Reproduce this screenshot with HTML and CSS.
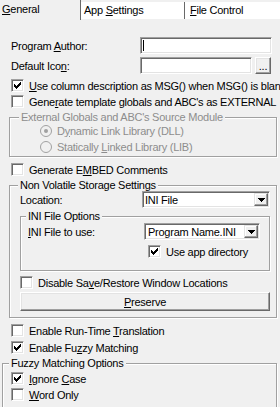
FILE: index.html
```html
<!DOCTYPE html>
<html lang="en">
<head>
    <meta charset="UTF-8">
    <meta name="viewport" content="width=device-width, initial-scale=1.0">
    <title>General</title>
    <link rel="stylesheet" href="styles.css">
</head>
<body>
    <div class="tabs">
        <div class="tab tab-active"><u>G</u>eneral</div>
        <div class="tab tab-app">App <u>S</u>ettings</div>
        <div class="tab tab-file"><u>F</u>ile Control</div>
    </div>

    <div class="page">
        <div class="field field-author">
            <label class="field-label">Program <u>A</u>uthor:</label>
            <div class="edit edit-author"><span class="caret"></span></div>
        </div>
        <div class="field field-icon">
            <label class="field-label">Default Ico<u>n</u>:</label>
            <div class="edit edit-icon"></div>
            <button class="btn btn-browse">...</button>
        </div>

        <div class="check-row row-msg">
            <span class="box"><svg width="11" height="11" shape-rendering="crispEdges"><path d="M8 2h1v1h-1z M7 3h2v1h-2z M2 4h1v1h-1z M6 4h3v1h-3z M2 5h2v1h-2z M5 5h3v1h-3z M2 6h5v1h-5z M3 7h3v1h-3z M4 8h1v1h-1z"/></svg></span>
            <span><u>U</u>se column description as MSG() when MSG() is blank</span>
        </div>
        <div class="check-row row-ext">
            <span class="box"></span>
            <span>Gene<u>r</u>ate template globals and ABC's as EXTERNAL</span>
        </div>

        <fieldset class="group group-ext">
            <legend>External Globals and ABC's Source Module</legend>
            <div class="radio-row">
                <svg class="radio" width="12" height="12"><circle cx="6" cy="6" r="5.5" fill="#f0f0f0" stroke="#a0a0a0"/><circle cx="6" cy="6" r="2" fill="#a0a0a0"/></svg>
                <span>D<u>y</u>namic Link Library (DLL)</span>
            </div>
            <div class="radio-row radio-lib">
                <svg class="radio" width="12" height="12"><circle cx="6" cy="6" r="5.5" fill="#f0f0f0" stroke="#a0a0a0"/></svg>
                <span>Statically <u>L</u>inked Library (LIB)</span>
            </div>
        </fieldset>

        <div class="check-row row-embed">
            <span class="box"></span>
            <span>Generate E<u>M</u>BED Comments</span>
        </div>

        <fieldset class="group group-nv">
            <legend>Non Volatile Storage Settings</legend>
            <div class="field field-location">
                <label class="loc-label">Location:</label>
                <div class="combo combo-location">
                    <span class="combo-text">INI File</span>
                    <span class="combo-btn"><svg width="7" height="4" shape-rendering="crispEdges"><path d="M0 0h7v1h-1v1h-1v1h-1v1h-1v-1h-1v-1h-1v-1h-1z"/></svg></span>
                </div>
            </div>

            <fieldset class="group group-ini">
                <legend>INI File Options</legend>
                <div class="field field-ini">
                    <label class="ini-label"><u>I</u>NI File to use:</label>
                    <div class="combo combo-ini">
                        <span class="combo-text">Program Name.INI</span>
                        <span class="combo-btn"><svg width="7" height="4" shape-rendering="crispEdges"><path d="M0 0h7v1h-1v1h-1v1h-1v1h-1v-1h-1v-1h-1v-1h-1z"/></svg></span>
                    </div>
                </div>
                <div class="check-row row-appdir">
                    <span class="box"><svg width="11" height="11" shape-rendering="crispEdges"><path d="M8 2h1v1h-1z M7 3h2v1h-2z M2 4h1v1h-1z M6 4h3v1h-3z M2 5h2v1h-2z M5 5h3v1h-3z M2 6h5v1h-5z M3 7h3v1h-3z M4 8h1v1h-1z"/></svg></span>
                    <span>Use app directory</span>
                </div>
            </fieldset>

            <div class="check-row row-disable">
                <span class="box"></span>
                <span>Disable Sa<u>v</u>e/Restore Window Locations</span>
            </div>
            <button class="btn btn-preserve"><u>P</u>reserve</button>
        </fieldset>

        <div class="check-row row-translate">
            <span class="box"></span>
            <span>Enable Run-Time <u>T</u>ranslation</span>
        </div>
        <div class="check-row row-fuzzy">
            <span class="box"><svg width="11" height="11" shape-rendering="crispEdges"><path d="M8 2h1v1h-1z M7 3h2v1h-2z M2 4h1v1h-1z M6 4h3v1h-3z M2 5h2v1h-2z M5 5h3v1h-3z M2 6h5v1h-5z M3 7h3v1h-3z M4 8h1v1h-1z"/></svg></span>
            <span>Enable Fu<u>z</u>zy Matching</span>
        </div>

        <fieldset class="group group-fuzzy">
            <legend>Fuzzy Matching Options</legend>
            <div class="check-row row-case">
                <span class="box"><svg width="11" height="11" shape-rendering="crispEdges"><path d="M8 2h1v1h-1z M7 3h2v1h-2z M2 4h1v1h-1z M6 4h3v1h-3z M2 5h2v1h-2z M5 5h3v1h-3z M2 6h5v1h-5z M3 7h3v1h-3z M4 8h1v1h-1z"/></svg></span>
                <span><u>I</u>gnore <u>C</u>ase</span>
            </div>
            <div class="check-row row-word">
                <span class="box"></span>
                <span><u>W</u>ord Only</span>
            </div>
        </fieldset>
    </div>
</body>
</html>
```

FILE: styles.css
```css
* {
    box-sizing: border-box;
}
body {
    margin: 0;
    width: 280px;
    height: 407px;
    overflow: hidden;
    background-color: #f0f0f0;
    font-family: "Liberation Sans", Arial, sans-serif;
    font-size: 11px;
    letter-spacing: -0.25px;
    color: #000;
}
u {
    text-decoration: underline;
    text-underline-offset: 1px;
}

/* tab strip */
.tabs {
    display: flex;
    height: 20px;
}
.tab {
    white-space: nowrap;
}
.tab-active {
    width: 81px;
    height: 20px;
    padding-left: 2px;
    line-height: 19px;
    border-right: 1px solid #696969;
}
.tab-app, .tab-file {
    margin-top: 2px;
    height: 17px;
    padding-left: 3px;
    line-height: 17px;
    background-color: #fff;
}
.tab-app {
    width: 104px;
    border-right: 1px solid #696969;
}
.tab-file {
    flex: 1;
    padding-left: 5px;
}

/* page */
.page {
    padding-top: 17px;
}
.field {
    display: flex;
    align-items: center;
    height: 17px;
}
.field-label {
    width: 140px;
    padding-left: 11px;
}
.field-icon {
    margin-top: 3px;
}
.edit {
    height: 17px;
    background-color: #fff;
    border: 1px solid;
    border-color: #a0a0a0 #fff #fff #a0a0a0;
    box-shadow: inset 1px 1px #696969, inset -1px -1px #e3e3e3;
}
.edit-author {
    width: 132px;
    position: relative;
}
.caret {
    position: absolute;
    left: 2px;
    top: 2px;
    width: 1px;
    height: 11px;
    background-color: #000;
}
.edit-icon {
    width: 112px;
}

.btn {
    padding: 0;
    font: inherit;
    letter-spacing: inherit;
    color: #000;
    background-color: #f0f0f0;
    border: 1px solid;
    border-color: #fff #696969 #696969 #fff;
    box-shadow: inset -1px -1px #a0a0a0, inset 1px 1px #e3e3e3;
}
.btn-browse {
    width: 16px;
    height: 17px;
    margin-left: 3px;
    line-height: 17px;
}
.btn-preserve {
    display: block;
    width: 250px;
    height: 19px;
    margin: 3px 0 0 10px;
}

/* checkboxes */
.check-row {
    display: flex;
    align-items: center;
    gap: 5px;
    height: 13px;
    margin-left: 11px;
    white-space: nowrap;
}
.box {
    flex: none;
    width: 13px;
    height: 13px;
    background-color: #fff;
    border: 1px solid;
    border-color: #a0a0a0 #fff #fff #a0a0a0;
    box-shadow: inset 1px 1px #696969, inset -1px -1px #e3e3e3;
}
.box svg {
    display: block;
}
.row-msg {
    margin-top: 5px;
}
.row-ext {
    margin-top: 3px;
}
.row-embed {
    margin-top: 6px;
}

/* group boxes */
.group {
    min-width: 0;
    margin: 0;
    padding: 0;
    border: 1px solid #a0a0a0;
    box-shadow: inset 1px 1px #fff, 1px 1px #fff;
}
.group legend {
    padding: 0 2px;
    line-height: 12px;
    background-color: #f0f0f0;
}
.group-ext {
    margin: 3px 3px 0 9px;
    padding-bottom: 3px;
    color: #8d8d8d;
}
.group-ext legend {
    margin-left: 9px;
    line-height: 13px;
}
.radio-row {
    display: flex;
    align-items: center;
    gap: 5px;
    height: 13px;
    margin-left: 30px;
    white-space: nowrap;
}
.radio {
    flex: none;
}
.radio-lib {
    margin-top: 3px;
}

.group-nv {
    margin: 3px 3px 0 9px;
    padding-bottom: 6px;
}
.group-nv legend {
    margin-left: 8px;
}
.loc-label {
    width: 132px;
    padding-left: 10px;
}
.combo {
    display: flex;
    align-items: center;
    justify-content: space-between;
    height: 17px;
    padding: 0 2px 0 2px;
    background-color: #fff;
    border: 1px solid;
    border-color: #a0a0a0 #fff #fff #a0a0a0;
    box-shadow: inset 1px 1px #696969, inset -1px -1px #e3e3e3;
}
.combo-location {
    width: 128px;
}
.combo-btn {
    display: flex;
    align-items: center;
    justify-content: center;
    width: 14px;
    height: 13px;
    margin-right: -1px;
    background-color: #f0f0f0;
    border: 1px solid;
    border-color: #e3e3e3 #696969 #696969 #e3e3e3;
    box-shadow: inset -1px -1px #a0a0a0, inset 1px 1px #fff;
}

.group-ini {
    width: 250px;
    margin: 2px 0 0 10px;
    padding-bottom: 12px;
}
.group-ini legend {
    margin-left: 5px;
}
.field-ini {
    margin-top: 1px;
}
.ini-label {
    width: 123px;
    padding-left: 7px;
}
.combo-ini {
    width: 116px;
}
.combo-ini .combo-text {
    padding-left: 1px;
}
.row-appdir {
    margin: 5px 0 0 127px;
}
.row-disable {
    margin: 5px 0 0 10px;
}

.row-translate {
    margin-top: 6px;
}
.row-fuzzy {
    margin-top: 4px;
}
.group-fuzzy {
    margin: 3px 3px 0 2px;
    padding-bottom: 20px;
}
.group-fuzzy legend {
    margin-left: 6px;
}
.group-fuzzy .check-row {
    margin-left: 8px;
}
.row-case {
    margin-top: 3px;
}
.row-word {
    margin-top: 3px;
}
```
